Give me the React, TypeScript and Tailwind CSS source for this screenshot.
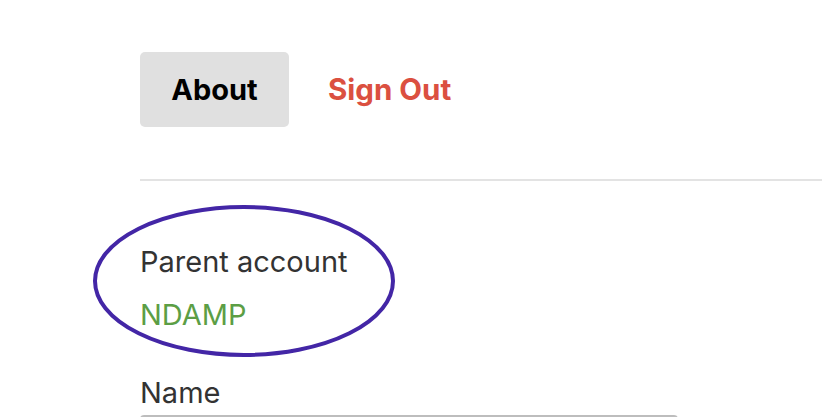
import React from "react";

export default function App() {
  return (
    <div className="relative h-[417px] w-[822px] overflow-hidden bg-white" style={{ fontFamily: "Inter, 'Noto Sans', sans-serif" }}>
      <div className="pl-[140px] pt-[52px]">
        <div className="flex items-center">
          <button className="flex h-[75px] w-[149px] items-center justify-center rounded-[5px] bg-[#e0e0e0] text-[29px] font-bold text-black">
            About
          </button>
          <button className="ml-[39px] text-[29.5px] font-bold text-[#db5040]">Sign Out</button>
        </div>
        <div className="mt-[52px] h-[2px] bg-[#e3e3e3]" />
        <div className="mt-[63px] text-[29px] leading-[36px] text-[#333333]">Parent account</div>
        <div className="mt-[17px] text-[29px] leading-[36px] text-[#5c9e45]">NDAMP</div>
        <div className="mt-[42px] text-[29px] leading-[36px] text-[#333333]">Name</div>
        <div className="mt-[4px] h-[20px] w-[538px] rounded-t-[4px] border-x border-t-[2px] border-[#bdbdbd]" />
      </div>
      <svg className="absolute left-0 top-0" width="822" height="417">
        <ellipse cx="244" cy="281" rx="149" ry="74" fill="none" stroke="#4326a6" strokeWidth="4" />
      </svg>
    </div>
  );
}
